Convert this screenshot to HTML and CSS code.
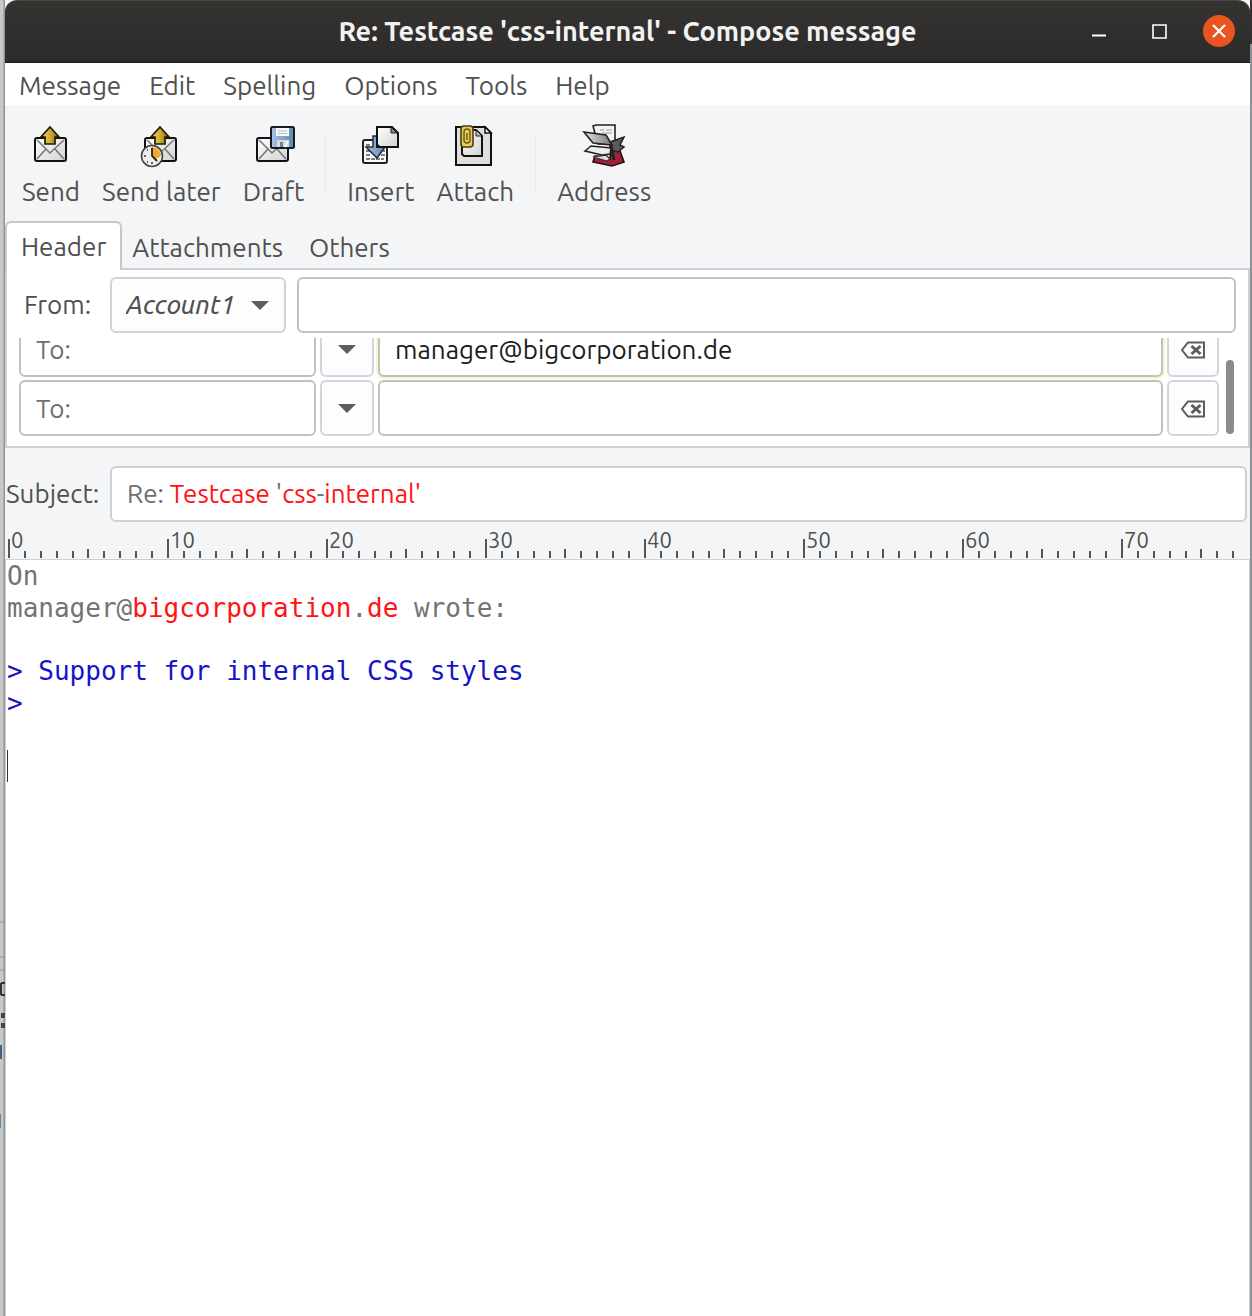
FILE: index.html
```html
<!DOCTYPE html>
<html lang="en">
<head>
<meta charset="utf-8">
<meta name="viewport" content="width=device-width, initial-scale=1">
<title>Re: Testcase 'css-internal' - Compose message</title>
<link rel="stylesheet" href="styles.css">
</head>
<body>
<svg class="defs" aria-hidden="true">
  <defs>
    <linearGradient id="gold" x1="0" x2="1"><stop offset="0" stop-color="#ecd87c"/><stop offset=".5" stop-color="#d2ab35"/><stop offset="1" stop-color="#8d6a0c"/></linearGradient>
    <linearGradient id="paper" x1="0" y1="0" x2="1" y2="1"><stop offset="0" stop-color="#ffffff"/><stop offset="1" stop-color="#d2d2d0"/></linearGradient>
    <linearGradient id="blue" x1="0" x2="1"><stop offset="0" stop-color="#a9c5e2"/><stop offset="1" stop-color="#5f87b0"/></linearGradient>
    <linearGradient id="steel" x1="0" x2="1"><stop offset="0" stop-color="#e4e4e4"/><stop offset="1" stop-color="#777777"/></linearGradient>
  </defs>
  <symbol id="envelope" viewBox="0 0 44 44">
    <rect x="6" y="14" width="31" height="23" rx="2" fill="url(#paper)" stroke="#111" stroke-width="2"/>
    <path d="M8 16l13 13 14-13M8 35l9-10M35 35l-9-10" fill="none" stroke="#777" stroke-width="1.6"/>
  </symbol>
  <symbol id="up" viewBox="0 0 44 44">
    <path d="M21 3l9 10h-4v7H16v-7h-4z" fill="url(#gold)" stroke="#221a00" stroke-width="1.7"/>
  </symbol>
  <symbol id="ticks" viewBox="0 0 159 20">
    <path d="M1 1v19" stroke="#555" stroke-width="2"/>
    <path d="M17 13v7M33 13v7M49 13v7M65 13v7M80 11v9M96 13v7M112 13v7M128 13v7M144 13v7" stroke="#555" stroke-width="2"/>
  </symbol>
  <symbol id="erase" viewBox="0 0 26 18">
    <path d="M8 1.5h16v15H8L2 9z" fill="none" stroke="#5c5c5c" stroke-width="2"/>
    <path d="M11.500 5l9 8M20.500 5l-9 8" stroke="#5c5c5c" stroke-width="3"/>
  </symbol>
  <symbol id="caret" viewBox="0 0 18 10"><path d="M0 0h18L9 9z" fill="#5c5c5c"/></symbol>
</svg>
<div class="desktop">
  <div class="behind" aria-hidden="true">
    <svg width="6" height="240" viewBox="0 900 6 240">
      <path d="M0 922h6M0 957h6M0 970h6" stroke="#90959a"/>
      <path d="M5 983H1M1 983v12M1 995h4" fill="none" stroke="#333" stroke-width="2"/>
      <path d="M1 1013h4v5H1zM1 1023h4v5H1z" fill="#444"/>
      <path d="M0 1045h2v14H0z" fill="#3f5f86"/>
      <path d="M0 1114h1v14H0z" fill="#5b8cc0"/>
    </svg>
  </div>
  <main class="window">
    <header class="titlebar">
      <h1>Re: Testcase 'css-internal' - Compose message</h1>
      <div class="controls">
        <button type="button" aria-label="Minimize"><svg width="32" height="32"><path d="M9 20.500h14" stroke="#fff" stroke-width="2"/></svg></button>
        <button type="button" aria-label="Maximize"><svg width="32" height="32"><path d="M10 10h13v13H10z" fill="none" stroke="#fff" stroke-width="1.600"/></svg></button>
        <button type="button" class="close" aria-label="Close"><svg width="32" height="32"><path d="M10 10l12 12M22 10L10 22" stroke="#fff" stroke-width="2.200"/></svg></button>
      </div>
    </header>
    <nav class="menubar">
      <button type="button">Message</button>
      <button type="button">Edit</button>
      <button type="button">Spelling</button>
      <button type="button">Options</button>
      <button type="button">Tools</button>
      <button type="button">Help</button>
    </nav>
    <div class="toolbar" role="toolbar">
      <button type="button"><svg viewBox="0 0 44 44"><use href="#envelope"/><use href="#up"/></svg>Send</button>
      <button type="button"><svg viewBox="0 0 44 44"><use href="#envelope"/><use href="#up"/>
        <circle cx="13" cy="32" r="10.500" fill="#efefed" stroke="#444" stroke-width="1.6"/>
        <path d="M13 32v-9a9 9 0 0 1 9 9l-5 3z" fill="#f0a830"/>
        <path d="M13 24v8l5 5" fill="none" stroke="#222" stroke-width="1.8"/>
        <path d="M12 39h2M5 32h2M8 26h1M8 38h1" stroke="#333" stroke-width="1.5"/></svg>Send later</button>
      <button type="button"><svg viewBox="0 0 44 44"><use href="#envelope"/>
        <rect x="20" y="3" width="23" height="21" rx="1.500" fill="url(#blue)" stroke="#151c26" stroke-width="2"/>
        <path d="M25 4h13v8H25z" fill="#f6f8fa"/><path d="M27 7h9M27 9.500h9" stroke="#b7c0c9"/>
        <path d="M26 16h12v7H26z" fill="#d8dcdf"/><path d="M29 18h3v5h-3z" fill="#6d8299"/><path d="M37 17l-3 6" stroke="#fff" stroke-width="2"/></svg>Draft</button>
      <hr>
      <button type="button"><svg viewBox="0 0 44 44">
        <rect x="4" y="16" width="24" height="23" rx="2" fill="#fbfbf7" stroke="#222" stroke-width="2"/>
        <path d="M7 21h5M7 27h4M7 31h5M24 27h2M22 31h4M7 35h18" stroke="#555" stroke-width="1.600" stroke-dasharray="4 1"/>
        <path d="M18 3h15l6 6v14H18z" fill="url(#paper)" stroke="#111" stroke-width="2"/>
        <path d="M32 3v6h6z" fill="#888" stroke="#222"/>
        <path d="M18 12h-4v11H7l11 11 8-11h-5l-3-3z" fill="url(#blue)" stroke="#1c2e42" stroke-width="1.500"/>
        <path d="M18 3v20h12" fill="none" stroke="#111" stroke-width="2"/></svg>Insert</button>
      <button type="button"><svg viewBox="0 0 44 44">
        <path d="M3 3h29l6 6v32H3z" fill="#dededb" stroke="#111" stroke-width="2"/>
        <path d="M32 3v6h6z" fill="#fff" stroke="#111" stroke-width="1.500"/>
        <path d="M9 6h14l6 6v20H11l-2-2z" fill="url(#paper)" stroke="#111" stroke-width="2"/>
        <path d="M23 6v6h6z" fill="#bbb" stroke="#222"/>
        <rect x="8" y="2" width="12" height="21" rx="3" fill="#e2cb62" stroke="#4c3d08" stroke-width="1.600"/>
        <path d="M17 8v8a3 3 0 0 1-6 0V8q0-3 3-3t3 3M14 9v7" fill="none" stroke="#755d0c" stroke-width="1.500"/></svg>Attach</button>
      <hr>
      <button type="button"><svg viewBox="0 0 44 44">
        <path d="M29 24l9 3 4 11-12 4-19-4 2-6 15 3z" fill="#a11f39" stroke="#241013" stroke-width="1.600"/>
        <path d="M11 2l3-1h19v19H16z" fill="#f4f4f2" stroke="#222" stroke-width="1.600"/>
        <path d="M18 6h4M24 6h6M20 9h10" stroke="#999" stroke-width="1.200"/>
        <path d="M28 18l14-5-4 8 4 2-6 5-8-2z" fill="#5b5b5b" stroke="#222" stroke-width="1.500"/>
        <path d="M2 8l22 3 6 10-19-2z" fill="url(#steel)" stroke="#222" stroke-width="1.600"/>
        <path d="M9 22l-6 5 17 4 8-1 1-6z" fill="#eeeeec" stroke="#222" stroke-width="1.500"/>
        <path d="M11 33l13-2 4 4-3 2z" fill="#ddd" stroke="#333" stroke-width="1.300"/>
        <path d="M29 22l3 14" stroke="#222" stroke-width="3"/></svg>Address</button>
    </div>
    <div class="tabs" role="tablist">
      <button type="button" role="tab" aria-selected="true">Header</button>
      <button type="button" role="tab" aria-selected="false">Attachments</button>
      <button type="button" role="tab" aria-selected="false">Others</button>
    </div>
    <section class="panel" role="tabpanel">
      <div class="from">
        <label for="account">From:</label>
        <div class="picker">
          <select id="account"><option>Account1</option></select>
          <svg width="18" height="10" aria-hidden="true"><use href="#caret"/></svg>
        </div>
        <input class="field grow" type="text" aria-label="From address">
      </div>
      <div class="recipients">
        <div class="rows">
          <div class="row">
            <input class="field kind" type="text" value="To:" aria-label="Recipient type">
            <button type="button" class="square" aria-label="Choose type"><svg width="18" height="10"><use href="#caret"/></svg></button>
            <input class="field grow known" type="text" value="manager@bigcorporation.de" aria-label="Recipient address">
            <button type="button" class="square wipe" aria-label="Remove recipient"><svg width="26" height="18"><use href="#erase"/></svg></button>
          </div>
          <div class="row">
            <input class="field kind" type="text" value="To:" aria-label="Recipient type">
            <button type="button" class="square" aria-label="Choose type"><svg width="18" height="10"><use href="#caret"/></svg></button>
            <input class="field grow" type="text" aria-label="Recipient address">
            <button type="button" class="square wipe" aria-label="Remove recipient"><svg width="26" height="18"><use href="#erase"/></svg></button>
          </div>
        </div>
        <div class="track"><div class="thumb"></div></div>
      </div>
    </section>
    <div class="subject">
      <span id="subject-label">Subject:</span>
      <div class="field grow" role="textbox" contenteditable="true" spellcheck="false" aria-labelledby="subject-label">Re: <mark>Testcase</mark> '<mark>css</mark>-<mark>internal'</mark></div>
    </div>
    <div class="ruler" aria-hidden="true">
      <div class="decade"><span>0</span><svg><use href="#ticks"/></svg></div>
      <div class="decade"><span>10</span><svg><use href="#ticks"/></svg></div>
      <div class="decade"><span>20</span><svg><use href="#ticks"/></svg></div>
      <div class="decade"><span>30</span><svg><use href="#ticks"/></svg></div>
      <div class="decade"><span>40</span><svg><use href="#ticks"/></svg></div>
      <div class="decade"><span>50</span><svg><use href="#ticks"/></svg></div>
      <div class="decade"><span>60</span><svg><use href="#ticks"/></svg></div>
      <div class="decade"><span>70</span><svg><use href="#ticks"/></svg></div>
    </div>
    <div class="editor" role="textbox" aria-multiline="true" aria-label="Message body" contenteditable="true" spellcheck="false">
      <p>On<br>manager@<mark>bigcorporation</mark>.<mark>de</mark> wrote:</p>
      <p class="quote">&gt; Support for internal CSS styles<br>&gt;</p>
      <p class="cursor"></p>
    </div>
  </main>
</div>
</body>
</html>
```
FILE: styles.css
```css
* { box-sizing: border-box; }

body {
  margin: 0;
  font: 450 26px/32px "Ubuntu", "Noto Sans", sans-serif;
  color: #505050;
}

button, input, select {
  font: inherit;
  color: inherit;
  margin: 0;
  padding: 0;
  border: 0;
  background: none;
}

svg { display: block; flex: none; }
.defs { position: absolute; width: 0; height: 0; }

mark { background: none; color: #ff1414; }

.desktop {
  display: flex;
  min-height: 100vh;
  padding-right: 2px;
  background: linear-gradient(#33302f 44px, #8d9094 44px);
}

.behind {
  width: 5px;
  overflow: hidden;
  padding-top: 900px;
  background: linear-gradient(to right, #c8c8c6 3px, #949494 4px);
}

.window {
  flex: 1;
  min-width: 0;
  display: flex;
  flex-direction: column;
  background: #f4f5f7;
}

.titlebar {
  display: grid;
  grid-template-columns: 1fr auto 1fr;
  align-items: center;
  height: 63px;
  padding: 0 15px 2px;
  border-top: 1px solid #4a4846;
  border-bottom: 1px solid #1f1c1c;
  border-radius: 12px 12px 0 0;
  background: linear-gradient(#353431, #2d2a2b);
  color: #f2f2f0;
}
.titlebar h1 {
  grid-column: 2;
  margin: 0;
  font-size: 27px;
  line-height: 32px;
  font-weight: 700;
  white-space: nowrap;
}
.controls { display: flex; justify-content: flex-end; gap: 28px; }
.controls button { width: 32px; height: 32px; border-radius: 50%; }
.controls .close { background: #e95420; }

.menubar {
  display: flex;
  gap: 28px;
  height: 44px;
  padding: 7px 14px 5px;
  border-bottom: 1px solid #ececee;
  background: #fff;
}

.toolbar {
  display: flex;
  height: 114px;
  padding: 17px 6px 0;
}
.toolbar button {
  display: flex;
  flex-direction: column;
  align-items: center;
  gap: 8px;
  height: 90px;
  padding: 0 11px;
}
.toolbar svg { width: 44px; height: 44px; }
.toolbar hr {
  width: 1px;
  height: 60px;
  margin: 10px;
  border: 0;
  background: #e8e9ec;
}

.tabs {
  display: flex;
  height: 49px;
  border-bottom: 2px solid #ccd1d7;
}
.tabs button { padding: 6px 16px 0 10px; }
.tabs button[aria-selected="true"] {
  height: 49px;
  padding: 0 14px;
  border: 2px solid #c6c7c8;
  border-bottom: 0;
  border-radius: 6px 6px 0 0;
  background: #fff;
}

.panel {
  border: 2px solid #ccd1d7;
  border-top: 0;
  background: #fff;
  padding: 7px 11px 10px 12px;
}

.field {
  height: 56px;
  padding: 0 15px;
  border: 2px solid #c1c1be;
  border-radius: 6px;
  background: #fff;
}
.grow { flex: 1; min-width: 0; }

.from { display: flex; align-items: center; gap: 11px; padding: 0 1px 0 5px; }
.from label { width: 75px; }
.picker {
  position: relative;
  display: flex;
  width: 176px;
}
.picker select {
  appearance: none;
  width: 100%;
  height: 56px;
  padding: 0 14px;
  border: 2px solid #ccd3da;
  border-radius: 6px;
  background: #fdfdfe;
  font-style: italic;
}
.picker svg { position: absolute; right: 17px; top: 24px; pointer-events: none; }

.recipients {
  display: flex;
  height: 98px;
  margin-top: 5px;
}
.rows {
  flex: 1;
  min-width: 0;
  display: flex;
  flex-direction: column;
  justify-content: flex-end;
  gap: 3px;
  overflow: hidden;
}
.row { display: flex; gap: 4px; }
.kind { width: 297px; color: #707070; }
.square {
  display: grid;
  place-items: center;
  width: 54px;
  height: 56px;
  padding-top: 2px;
  border: 2px solid #d0d6dd;
  border-radius: 6px;
  background: #fdfdfe;
}
.wipe { width: 52px; }
.known { color: #1c1c1c; box-shadow: 0 0 0 2px #f5f7c8; }
.track { display: flex; align-items: flex-end; padding: 0 3px 2px 7px; }
.thumb { width: 8px; height: 74px; border-radius: 4px; background: #8b8b8b; }

.subject {
  display: flex;
  align-items: center;
  gap: 8px;
  padding: 18px 3px 0 1px;
}
.subject span { width: 96px; }
.subject .field { padding: 10px 15px; border-color: #ccd1d7; color: #707070; white-space: nowrap; }

.ruler {
  display: flex;
  height: 37px;
  margin-right: 12px;
  padding: 6px 0 0 3px;
  overflow: hidden;
}
.decade { flex: none; display: grid; width: 159px; }
.decade > * { grid-area: 1 / 1; }
.decade span { padding-left: 3px; font-size: 22px; line-height: 24px; }
.decade svg { width: 159px; height: 20px; margin-top: 10px; }

.editor {
  flex: 1;
  padding: 0 1px;
  border: 1px solid #ccd1d7;
  border-width: 1px 1px 0;
  background: #fff;
  color: #737373;
  font: 26px/32px "DejaVu Sans Mono", monospace;
}
.editor p { margin: 0 0 31px; }
.editor .quote { color: #1414c8; }
.editor .cursor { height: 32px; border-left: 1px solid #333; }
```
